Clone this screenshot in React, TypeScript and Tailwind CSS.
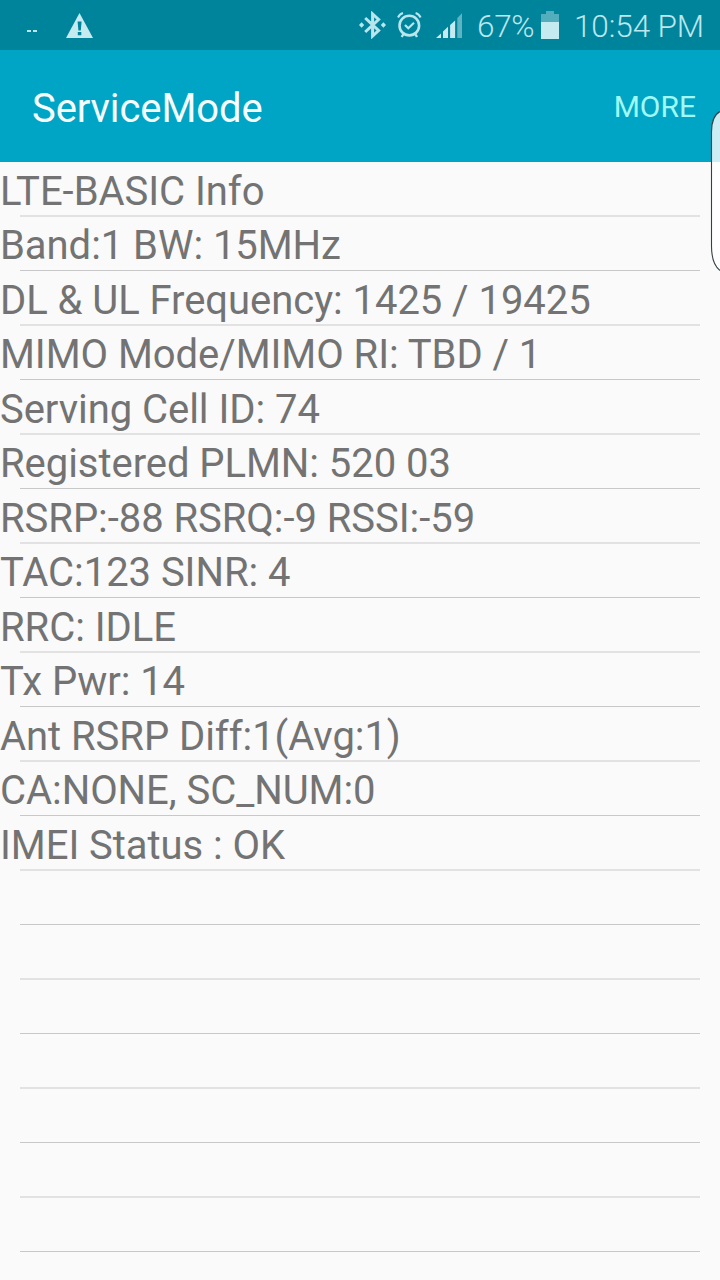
const lines: string[] = [
  'LTE-BASIC Info',
  'Band:1 BW: 15MHz',
  'DL & UL Frequency: 1425 / 19425',
  'MIMO Mode/MIMO RI: TBD / 1',
  'Serving Cell ID: 74',
  'Registered PLMN: 520 03',
  'RSRP:-88 RSRQ:-9 RSSI:-59',
  'TAC:123 SINR: 4',
  'RRC: IDLE',
  'Tx Pwr: 14',
  'Ant RSRP Diff:1(Avg:1)',
  'CA:NONE, SC_NUM:0',
  'IMEI Status : OK',
  '', '', '', '', '', '', '',
];

function WarningIcon() {
  return (
    <svg className="ml-[29px] h-[25px] w-[27px]" viewBox="0 0 27 25">
      <path d="M13.5 0 27 25H0Z" fill="#c5ebf0" />
      <path d="M11.6 8.5h4l-.8 9h-2.4zM11.8 19h3.5v3.2h-3.5z" fill="#00849c" />
    </svg>
  );
}

function BluetoothIcon() {
  return (
    <svg className="h-[28px] w-[27px]" viewBox="0 0 27 28" fill="none">
      <path d="M6.2 7 19.6 19.5 13.6 25V3L19.6 8.5 6.2 21" stroke="#b9e6ed" strokeWidth="3" />
      <path d="M0 14 2.6 11.2 5.2 14 2.6 16.8ZM21.8 14 24.4 11.2 27 14 24.4 16.8Z" fill="#b9e6ed" />
    </svg>
  );
}

function AlarmIcon() {
  return (
    <svg className="ml-[11px] h-[26px] w-[25px]" viewBox="0 0 25 26" fill="none" stroke="#b9e6ed">
      <circle cx="12.3" cy="13.6" r="9.8" strokeWidth="2.6" />
      <path d="M8 13 11.3 16.3 17 10.7" strokeWidth="2.2" />
      <path d="M1 5.5Q2.6 2 6 1M18.6 1Q22 2 23.6 5.5" strokeWidth="2" />
      <path d="M6.7 21.5 4.7 25M18 21.5 20 25" strokeWidth="2.4" />
    </svg>
  );
}

function SignalIcon() {
  return (
    <svg className="ml-[14px] mt-px h-[27px] w-[27px]" viewBox="0 0 27 27" fill="#c5ebf0">
      <path d="M0 26 5 21.5V26ZM7 19.4 12 14.8V26H7ZM14.1 13 19.1 8.4V26H14.1Z" />
      <path d="M21.3 6 26 1.2V26H21.3Z" fill="#5eb4c2" />
    </svg>
  );
}

function BatteryIcon() {
  return (
    <svg className="ml-[6px] h-[29px] w-[18px]" viewBox="0 0 18 29">
      <path d="M0 3H5V0H13V3H18V11H0Z" fill="#52adbc" />
      <path d="M0 11H18V28H0Z" fill="#c5ebf0" />
    </svg>
  );
}

function StatusBar() {
  return (
    <header className="flex h-[50px] items-center bg-[#00849c] text-[#bce7ee]">
      <div className="ml-[27px] mt-[12px] flex gap-[2px]">
        <i className="h-[2px] w-[4px] bg-[#bce7ee]" />
        <i className="h-[2px] w-[4px] bg-[#bce7ee]" />
      </div>
      <WarningIcon />
      <div className="ml-auto flex items-center pr-[16px]">
        <BluetoothIcon />
        <AlarmIcon />
        <SignalIcon />
        <span className="ml-[14px] mt-[4px] w-[58px] whitespace-nowrap text-[31.5px] font-light leading-[36px] tracking-[-0.3px]">67%</span>
        <BatteryIcon />
        <span className="ml-[15px] mt-[4px] w-[130px] whitespace-nowrap text-[31.5px] font-light leading-[36px] tracking-[-0.1px]">10:54 PM</span>
      </div>
    </header>
  );
}

function InfoRow({ text, softDivider }: { text: string; softDivider: boolean }) {
  return (
    <li className={softDivider ? 'h-[55px]' : 'h-[54px]'}>
      <span
        className={`block h-[53px] whitespace-pre text-[40px] leading-[48px] tracking-[-0.05px] text-[#737373] ${softDivider ? 'pt-[6px]' : 'pt-[5px]'}`}
      >
        {text}
      </span>
      <hr className={`mx-[20px] border-0 ${softDivider ? 'h-[2px] bg-[#e2e2e2]' : 'h-px bg-[#c8c8c8]'}`} />
    </li>
  );
}

export default function App() {
  return (
    <main className="relative h-[1280px] w-[720px] overflow-hidden bg-[#fafafa] font-['Roboto',sans-serif]">
      <StatusBar />
      <div className="flex h-[112px] items-center justify-between bg-[#00a4c4] pl-[32px] pr-[24px]">
        <h1 className="pt-[5px] text-[40px] leading-[48px] tracking-[-0.1px] text-[#f5fdff]">ServiceMode</h1>
        <button className="pt-[2px] text-[30px] leading-[36px] text-[#a0f9f5]">MORE</button>
      </div>
      <ul>
        {lines.map((line, index) => (
          <InfoRow key={index} text={line} softDivider={index % 2 === 0} />
        ))}
      </ul>
      <svg className="absolute left-[710px] top-[108px] h-[166px] w-[10px]" viewBox="0 0 10 166">
        <path d="M10 3.5Q1.5 8 1.5 24V138Q1.5 156 10 162.5Z" fill="#fff" />
        <path d="M10 3.5Q1.5 8 1.5 24V54H10Z" fill="#ccedf3" />
        <path d="M10 3.5Q1.5 8 1.5 24V138Q1.5 156 10 162.5" fill="none" stroke="#334145" strokeWidth="1.1" />
      </svg>
    </main>
  );
}
